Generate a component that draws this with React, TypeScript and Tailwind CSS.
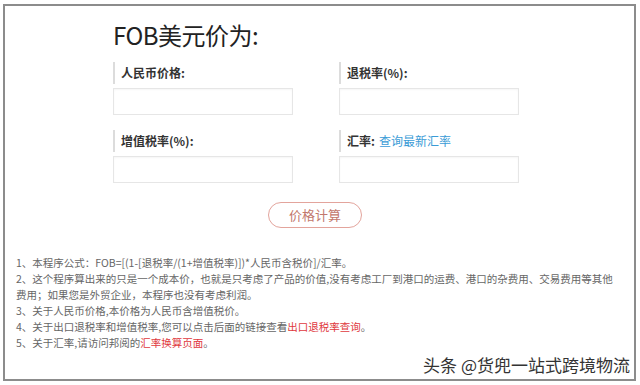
export default function App() {
  const fields = [
    { id: 'rmb', label: '人民币价格:' },
    { id: 'tui', label: '退税率(%):' },
    { id: 'zeng', label: '增值税率(%):' },
    { id: 'huilv', label: '汇率:', link: '查询最新汇率' },
  ];

  return (
    <div className="w-[640px] h-[385px] bg-white pt-[4px] pl-[3px] font-['Noto_Sans_CJK_SC','Noto_Sans',sans-serif]">
      <div className="relative w-[633px] h-[377px] border-2 border-[#8c8c8c] bg-white">
        <div className="pl-[108px] pt-[14px]">
          <h1 className="text-[24px] leading-[30px] text-[#222] tracking-[-0.5px]">FOB美元价为:</h1>

          <div className="grid grid-cols-[180px_180px] gap-x-[46px] gap-y-[15px] mt-[12px]">
            {fields.map((f) => (
              <div key={f.id}>
                <div className="flex items-center h-[22px] border-l-2 border-[#dcdcdc] pl-[6px] text-[12px] font-bold text-[#333]">
                  {f.label}
                  {f.link && <span className="ml-[4px] font-normal text-[#3a9bd6]">{f.link}</span>}
                </div>
                <div className="mt-[4px] h-[27px] border border-[#e6e6e6] shadow-[inset_0_1px_2px_rgba(0,0,0,0.04)]"></div>
              </div>
            ))}
          </div>

          <div className="flex mt-[19px] pl-[155px]">
            <div className="w-[94px] h-[26px] rounded-full border border-[#e3a49c] flex items-center justify-center text-[13px] text-[#c2786c]">
              价格计算
            </div>
          </div>
        </div>

        <div className="mt-[27px] pl-[11px] text-[10.5px] leading-[16px] text-[#666]">
          <p>1、本程序公式：FOB=[(1-[退税率/(1+增值税率)])*人民币含税价]/汇率。</p>
          <p>
            2、这个程序算出来的只是一个成本价，也就是只考虑了产品的价值,没有考虑工厂到港口的运费、港口的杂费用、交易费用等其他
            <br />
            费用；如果您是外贸企业，本程序也没有考虑利润。
          </p>
          <p>3、关于人民币价格,本价格为人民币含增值税价。</p>
          <p>
            4、关于出口退税率和增值税率,您可以点击后面的链接查看<span className="text-[#e0393e]">出口退税率查询</span>。
          </p>
          <p>
            5、关于汇率,请访问邦阅的<span className="text-[#e0393e]">汇率换算页面</span>。
          </p>
        </div>

        <div className="absolute right-[4px] bottom-[3px] text-[17px] leading-[22px] text-[#333] [text-shadow:0_0_2px_#fff,0_0_2px_#fff]">
          头条 @货兜一站式跨境物流
        </div>
      </div>
    </div>
  );
}
